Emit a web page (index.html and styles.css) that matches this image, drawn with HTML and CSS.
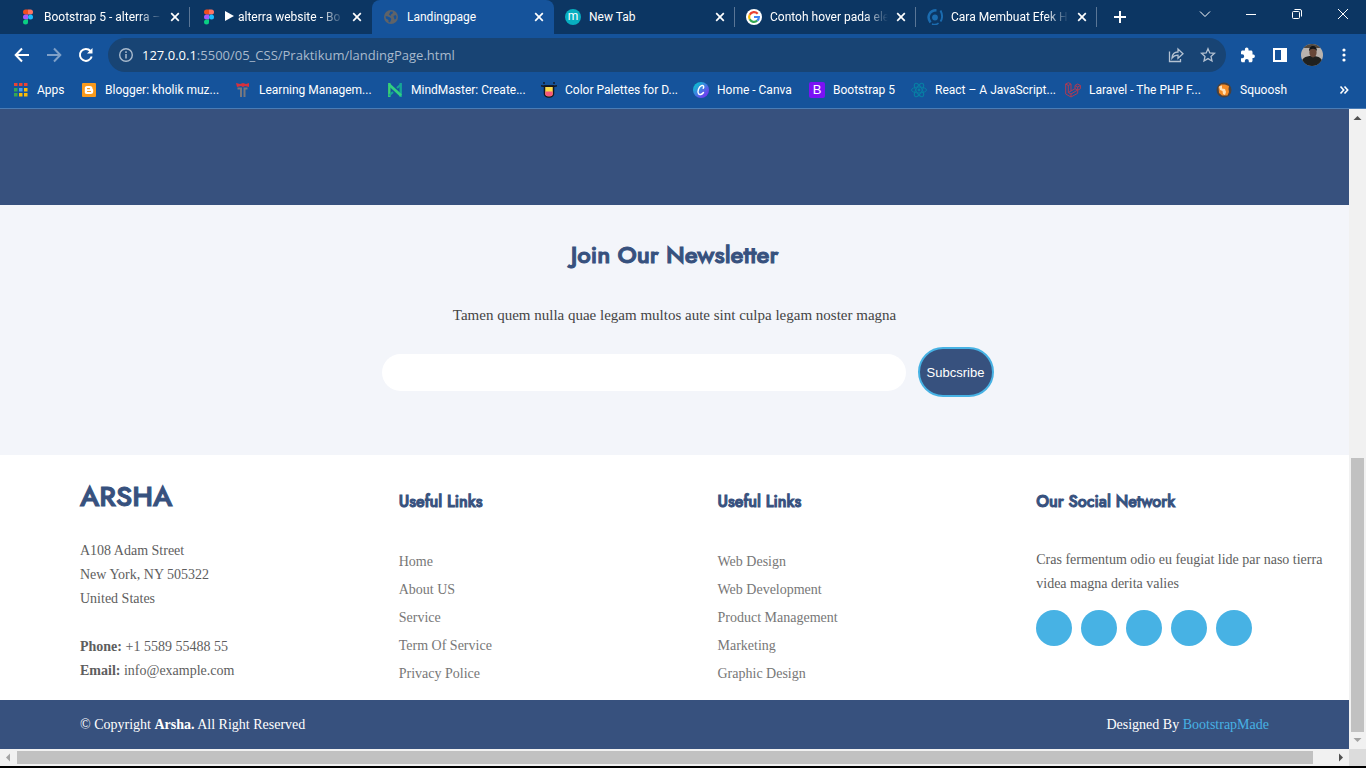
FILE: index.html
```html
<!DOCTYPE html>
<html lang="en">
<head>
<meta charset="utf-8">
<title>Landingpage</title>
<link rel="stylesheet" href="styles.css">
</head>
<body>
<svg class="defs" aria-hidden="true">
  <symbol id="figma" viewBox="0 0 16 16">
    <path fill="#f24e1e" d="M8 .5H5.500a2.500 2.500 0 0 0 0 5H8z"/>
    <path fill="#ff7262" d="M8 .5h2.500a2.500 2.500 0 0 1 0 5H8z"/>
    <path fill="#a259ff" d="M8 5.500H5.500a2.500 2.500 0 0 0 0 5H8z"/>
    <circle cx="10.500" cy="8" r="2.500" fill="#1abcfe"/>
    <path fill="#0acf83" d="M8 10.500H5.500a2.500 2.500 0 1 0 2.500 2.500z"/>
  </symbol>
  <symbol id="close" viewBox="0 0 10 10"><path d="M1.200 1.200l7.600 7.600M8.800 1.200L1.200 8.800" stroke="#fff" stroke-width="1.700" fill="none"/></symbol>
</svg>

<header class="browser">
  <div class="tabstrip">
    <div class="tab"><svg class="icon"><use href="#figma"/></svg><span class="tab-title fade">Bootstrap 5 - alterra –</span><button class="tab-close" aria-label="Close tab"><svg><use href="#close"/></svg></button></div>
    <div class="tab plain"><svg class="icon"><use href="#figma"/></svg><span class="tab-title fade"><svg class="play" viewBox="0 0 9 10"><path fill="#fff" d="M0 0l9 5-9 5z"/></svg>alterra website - Bo</span><button class="tab-close" aria-label="Close tab"><svg><use href="#close"/></svg></button></div>
    <div class="tab active"><svg class="icon" viewBox="0 0 16 16"><circle cx="8" cy="8" r="7" fill="#5f6368"/><path fill="#15539b" d="M2.500 7.500C4 7 5.500 8 7 8.500c1 .5 1.500 1.500 1 2.500l-1 2.500-1.500-.5V11L3 9.500zM7.500 2.500l2.500.3-.5 1.700L8 5.500 7.500 7 6 5.500zM10.500 7l2-1 1 1.500-.5 2.500-1.500.5z"/></svg><span class="tab-title">Landingpage</span><button class="tab-close" aria-label="Close tab"><svg><use href="#close"/></svg></button></div>
    <div class="tab"><span class="icon round-m">m</span><span class="tab-title">New Tab</span><button class="tab-close" aria-label="Close tab"><svg><use href="#close"/></svg></button></div>
    <div class="tab"><svg class="icon" viewBox="0 0 16 16"><circle cx="8" cy="8" r="8" fill="#fff"/><g fill="none" stroke-width="2.200"><path stroke="#ea4335" d="M11.700 4.700A4.900 4.900 0 0 0 3.700 5.700"/><path stroke="#fbbc05" d="M3.700 5.700a4.900 4.900 0 0 0 0 4.600"/><path stroke="#34a853" d="M3.700 10.300a4.900 4.900 0 0 0 7.500 1.400"/><path stroke="#4285f4" d="M11.200 11.700A4.900 4.900 0 0 0 12.900 8H8"/></g></svg><span class="tab-title fade">Contoh hover pada ele</span><button class="tab-close" aria-label="Close tab"><svg><use href="#close"/></svg></button></div>
    <div class="tab"><svg class="icon" viewBox="0 0 16 16"><circle cx="8" cy="8.500" r="2.900" fill="#1b6cb0"/><path d="M9.500 1.300C2 1.500-.5 8 3.500 13.500" fill="none" stroke="#1b6cb0" stroke-width="2.500"/><path d="M5 15c2.500 1 5 .5 6.500-1" fill="none" stroke="#1b6cb0" stroke-width="1.500"/><path d="M13.500 1.500c2 4 2 8 0 11" fill="none" stroke="#1b6cb0" stroke-width="1.900"/></svg><span class="tab-title fade">Cara Membuat Efek H</span><button class="tab-close" aria-label="Close tab"><svg><use href="#close"/></svg></button></div>
    <button class="new-tab" aria-label="New tab"><svg viewBox="0 0 12 12"><path d="M6 0v12M0 6h12" stroke="#fff" stroke-width="2"/></svg></button>
    <div class="window-controls">
      <button aria-label="Search tabs"><svg viewBox="0 0 12 12"><path d="M1 3.500l5 5 5-5"/></svg></button>
      <button aria-label="Minimize"><svg viewBox="0 0 12 12"><path d="M1 6.500h10"/></svg></button>
      <button aria-label="Restore"><svg viewBox="0 0 12 12"><rect x="1.500" y="3.500" width="7" height="7" rx="1"/><path d="M3.500 1.500H9a1.500 1.500 0 0 1 1.500 1.500v5.500"/></svg></button>
      <button aria-label="Close"><svg viewBox="0 0 12 12"><path d="M1 1l10 10M11 1L1 11"/></svg></button>
    </div>
  </div>

  <div class="toolbar">
    <div class="nav">
      <button aria-label="Back"><svg viewBox="0 0 16 16"><path d="M15 8H2M8 1.500L1.700 8 8 14.500"/></svg></button>
      <button aria-label="Forward" class="dim"><svg viewBox="0 0 16 16"><path d="M1 8h13M8 1.500L14.300 8 8 14.500"/></svg></button>
      <button aria-label="Reload"><svg viewBox="0 0 16 16"><path d="M13.700 9.500A6 6 0 1 1 12.500 4"/><path d="M14.500 1v5.500H9z" fill="#fff" stroke="none"/></svg></button>
    </div>
    <div class="omnibox">
      <svg class="info" viewBox="0 0 16 16"><circle cx="8" cy="8" r="6.300" fill="none" stroke="#a9bacd" stroke-width="1.400"/><path d="M8 7v4.500M8 4.300v1.600" stroke="#a9bacd" stroke-width="1.500"/></svg>
      <a class="url" href="#"><span class="host">127.0.0.1</span>:5500/05_CSS/Praktikum/landingPage.html</a>
      <button aria-label="Share"><svg viewBox="0 0 16 16"><path d="M1.500 4.500v10h11V12M4 11c.3-4 2.500-6 6-6V2l5 4.700-5 4.600V8.200C7.500 8.200 5.500 9 4 11z"/></svg></button>
      <button aria-label="Bookmark this page"><svg viewBox="0 0 16 16"><path d="M8 1.700l1.800 4.200 4.700.4-3.500 3.100 1 4.600-4-2.400-4 2.400 1-4.600-3.500-3.100 4.700-.4z"/></svg></button>
    </div>
    <div class="actions">
      <button aria-label="Extensions"><svg viewBox="0 0 16 16"><path fill="#fff" d="M13.500 7.500h-1V5c0-.8-.7-1.500-1.500-1.500H8.500V2.300a1.800 1.800 0 0 0-3.600 0v1.200H2.500C1.700 3.500 1 4.200 1 5v2.300h1.200a2 2 0 0 1 0 4H1v2.400c0 .8.700 1.500 1.500 1.500h2.300V14a2 2 0 0 1 4 0v1.200H11c.8 0 1.500-.7 1.500-1.500V11h1a1.800 1.800 0 0 0 0-3.500z"/></svg></button>
      <button aria-label="Side panel"><svg viewBox="0 0 16 16"><path fill="#fff" fill-rule="evenodd" d="M1 1h14v14H1zM3 3v10h6V3z"/></svg></button>
      <button aria-label="Profile"><svg class="avatar" viewBox="0 0 22 22"><clipPath id="face"><circle cx="11" cy="11" r="11"/></clipPath><g clip-path="url(#face)"><path fill="#b9b3ae" d="M0 0h22v22H0z"/><path fill="#51483f" d="M0 0h22v4H0z"/><path fill="#20211f" d="M0 22c0-8 4-10 11-10s11 2 11 10z"/><ellipse cx="12" cy="8.500" rx="3.600" ry="5" fill="#674738"/><path fill="#151516" d="M8 7.500c-.5-7.500 8.500-7.500 8 0-1-3-6-4-8 0z"/></g></svg></button>
      <button aria-label="Menu"><svg viewBox="0 0 16 16"><g fill="#fff"><circle cx="8" cy="3" r="1.600"/><circle cx="8" cy="8" r="1.600"/><circle cx="8" cy="13" r="1.600"/></g></svg></button>
    </div>
  </div>

  <nav class="bookmarks" aria-label="Bookmarks">
    <a href="#"><svg class="icon" viewBox="0 0 16 16"><path fill="#ea4335" d="M1 1h3.500v3H1zM6 1h3.500v3H6zM11 1h3.500v3H11z"/><path fill="#34a853" d="M1 6h3.500v3.500H1zM1 11h3.500v3.500H1z"/><path fill="#4a9cf5" d="M6 6h3.500v3.500H6z"/><path fill="#fbbc05" d="M11 6h3.500v3.500H11zM6 11h3.500v3.500H6zM11 11h3.500v3.500H11z"/></svg>Apps</a>
    <a href="#"><svg class="icon" viewBox="0 0 16 16"><rect x="1" y="1" width="14" height="14" rx="1" fill="#f99a1c"/><path fill="#fff" d="M6 4h3a2.500 2.500 0 0 1 2.500 2.500c0 1 .7.600.7 1.500v1.500A2.500 2.500 0 0 1 9.700 12H6a2.200 2.200 0 0 1-2.200-2.500v-3A2.300 2.300 0 0 1 6 4z"/><path d="M6.500 6.700h2M6.500 9.500h3" stroke="#f99a1c" stroke-width="1.200" stroke-linecap="round"/></svg>Blogger: kholik muz...</a>
    <a href="#"><svg class="icon" viewBox="0 0 16 16"><path fill="#d8303c" d="M1 1l4 1 3-1 3 1 3-1v4l-4-1-2 1-2-1-4 1z"/><path d="M2.500 6.500H6V15M12.500 6.500H9.500V15" fill="none" stroke="#77787f" stroke-width="2"/></svg>Learning Managem...</a>
    <a href="#"><svg class="icon" viewBox="0 0 16 16"><path d="M13.700 1v14" stroke="#16a596" stroke-width="2.400"/><path d="M2.300 1v14" stroke="#3bd16f" stroke-width="2.400"/><path d="M2 2.500l12 11" stroke="#31d080" stroke-width="2.800"/><path d="M2 13.500L6 10M10 6l4-3.500" stroke="#16a596" stroke-width="2.200"/></svg>MindMaster: Create...</a>
    <a href="#"><svg class="icon" viewBox="0 0 16 16"><path fill="#f9dc4b" stroke="#16161c" stroke-width="1.500" d="M3.500 4h9v7a3.500 3.500 0 0 1-3.500 4H7a3.500 3.500 0 0 1-3.500-4z"/><path fill="#f7577b" d="M4.300 9.500h7.400V11.500A2.500 2.500 0 0 1 9 14.200H7a2.500 2.500 0 0 1-2.700-2.700z"/><path d="M0 3.700c2 .8 14 .8 16 0" fill="none" stroke="#16161c" stroke-width="1.500"/><circle cx="3" cy="1" r=".9" fill="#16161c"/><circle cx="13" cy="1" r=".9" fill="#16161c"/></svg>Color Palettes for D...</a>
    <a href="#"><svg class="icon" viewBox="0 0 16 16"><linearGradient id="canva" x1="0" y1="0" x2="1" y2="1"><stop offset=".1" stop-color="#08c5d0"/><stop offset=".9" stop-color="#7c2ff2"/></linearGradient><circle cx="8" cy="8" r="8" fill="url(#canva)"/><path d="M10.200 6.300c1.300-1.600.2-3.300-1.700-2.600C5.500 5 4.200 9.700 5.500 11.700c1 1.500 3.500.9 5-1.200" fill="none" stroke="#fff" stroke-width="1.400" stroke-linecap="round"/></svg>Home - Canva</a>
    <a href="#"><span class="icon square-b">B</span>Bootstrap 5</a>
    <a href="#"><svg class="icon" viewBox="0 0 16 16"><g fill="none" stroke="#087ea4"><ellipse cx="8" cy="8" rx="7.500" ry="3"/><ellipse cx="8" cy="8" rx="7.500" ry="3" transform="rotate(60 8 8)"/><ellipse cx="8" cy="8" rx="7.500" ry="3" transform="rotate(120 8 8)"/></g><circle cx="8" cy="8" r="1.400" fill="#087ea4"/></svg>React – A JavaScript...</a>
    <a href="#"><svg class="icon" viewBox="0 0 16 16"><path d="M.7 2L3.500.7 6 2v7l4-2.300V3.500l2.700-1.500 2.700 1.500v3.200L12.700 8.300v3L6 15 .7 12zM.7 2l2.600 1.500L6 2M3.300 3.500v7L6 9M3.300 10.500L6 12v3M6 12l6.700-4V5L10 3.500M12.700 5l2.700-1.500M10 6.700l2.700 1.500" fill="none" stroke="#b13a52"/></svg>Laravel - The PHP F...</a>
    <a href="#"><svg class="icon" viewBox="0 0 16 16"><circle cx="8" cy="8" r="7.500" fill="#4a413d"/><path fill="#f58b25" d="M2.500 5L5 2.500h4L13 4l-.5 3 .5 3-1.500 3.500H6L3 11z"/><path fill="#ffe1b6" d="M3 4.500l3-1v3l3 .5 1 3-1 3-2-1-.5-3L4 8z"/></svg>Squoosh</a>
    <button aria-label="More bookmarks"><svg viewBox="0 0 10 10"><path d="M1.500 1.500L4.700 5 1.500 8.500M5.500 1.500L8.700 5 5.500 8.500"/></svg></button>
  </nav>
</header>

<div class="viewport">
  <main class="page">
    <section class="band"></section>
    <section class="newsletter">
      <h2>Join Our Newsletter</h2>
      <p>Tamen quem nulla quae legam multos aute sint culpa legam noster magna</p>
      <form class="subscribe">
        <input type="email" aria-label="Email address">
        <button type="button">Subcsribe</button>
      </form>
    </section>
    <footer>
      <div class="columns">
        <section>
          <h1>ARSHA</h1>
          <address>A108 Adam Street<br>New York, NY 505322<br>United States<br><br><strong>Phone:</strong> +1 5589 55488 55<br><strong>Email:</strong> info@example.com</address>
        </section>
        <section>
          <h3>Useful Links</h3>
          <ul>
            <li><a href="#">Home</a></li>
            <li><a href="#">About US</a></li>
            <li><a href="#">Service</a></li>
            <li><a href="#">Term Of Service</a></li>
            <li><a href="#">Privacy Police</a></li>
          </ul>
        </section>
        <section>
          <h3>Useful Links</h3>
          <ul>
            <li><a href="#">Web Design</a></li>
            <li><a href="#">Web Development</a></li>
            <li><a href="#">Product Management</a></li>
            <li><a href="#">Marketing</a></li>
            <li><a href="#">Graphic Design</a></li>
          </ul>
        </section>
        <section>
          <h3>Our Social Network</h3>
          <p>Cras fermentum odio eu feugiat lide par naso tierra videa magna derita valies</p>
          <div class="social">
            <a href="#" aria-label="Twitter"></a>
            <a href="#" aria-label="Facebook"></a>
            <a href="#" aria-label="Instagram"></a>
            <a href="#" aria-label="Skype"></a>
            <a href="#" aria-label="LinkedIn"></a>
          </div>
        </section>
      </div>
      <div class="copyright">
        <span>© Copyright <strong>Arsha.</strong> All Right Reserved</span>
        <span>Designed By <a href="#">BootstrapMade</a></span>
      </div>
    </footer>
  </main>
  <div class="vscroll">
    <svg viewBox="0 0 17 17"><path fill="#505050" d="M4.500 11L8.500 7l4 4z"/></svg>
    <div class="vspace"></div>
    <div class="vthumb"></div>
    <svg viewBox="0 0 17 17"><path fill="#a3a3a3" d="M4.500 6l4 4 4-4z"/></svg>
  </div>
</div>
<div class="hscroll">
  <svg viewBox="0 0 17 17"><path fill="#a3a3a3" d="M10 4.500l-4 4 4 4z"/></svg>
  <div class="hthumb"></div>
  <svg viewBox="0 0 17 17"><path fill="#505050" d="M7 4.500l4 4-4 4z"/></svg>
  <div class="corner"></div>
</div>
</body>
</html>
```

FILE: styles.css
```css
* { box-sizing: border-box; }

body {
  margin: 0;
  min-height: 100vh;
  display: flex;
  flex-direction: column;
  background: #000;
  font-family: "Times New Roman", "Liberation Serif", serif;
}

button {
  border: 0;
  padding: 0;
  background: none;
  display: flex;
  align-items: center;
  justify-content: center;
}

a { text-decoration: none; color: inherit; }

.defs { display: none; }

/* Browser chrome */
.browser {
  background: #15539b;
  border-bottom: 1px solid #4a7cb5;
  color: #fff;
  font-family: "Segoe UI", Roboto, "Open Sans", sans-serif;
  font-size: 12px;
}

.icon { width: 16px; height: 16px; flex: none; }

.tabstrip {
  height: 34px;
  padding-left: 9px;
  display: flex;
  align-items: stretch;
  background: #0c3663;
}

.tab {
  flex: 0 1 181px;
  min-width: 0;
  display: flex;
  align-items: center;
  gap: 8px;
  padding: 0 10px 0 11px;
  position: relative;
}

.tab::after {
  content: "";
  position: absolute;
  right: 0;
  top: 7px;
  height: 20px;
  width: 1px;
  background: #5a7696;
}

.tab.plain::after, .tab.active::after { display: none; }

.tab.plain, .tab.active { flex-basis: 182px; }

.tab.active {
  background: #15539b;
  border-radius: 8px 8px 0 0;
}

.tab-title {
  flex: 1;
  min-width: 0;
  overflow: hidden;
  white-space: nowrap;
}

.tab-title.fade {
  -webkit-mask-image: linear-gradient(to right, #000 80%, transparent);
  mask-image: linear-gradient(to right, #000 80%, transparent);
}

.play { width: 9px; height: 10px; margin-right: 4px; }

.tab-close svg { width: 10px; height: 10px; }
.tab-close { width: 10px; }

.round-m, .square-b {
  display: flex;
  align-items: center;
  justify-content: center;
  line-height: 16px;
}
.round-m { border-radius: 50%; background: #08afc0; font-size: 12px; padding-bottom: 2px; }
.square-b { border-radius: 2px; background: #7a12f5; font-family: "Liberation Sans", sans-serif; font-size: 13px; }

.new-tab { width: 46px; }
.new-tab svg { width: 12px; height: 12px; }

.window-controls { display: flex; margin-left: auto; height: 28px; }
.window-controls button { width: 46px; }
.window-controls svg { width: 12px; height: 12px; fill: none; stroke: #fff; }

.toolbar {
  display: flex;
  align-items: center;
  padding: 4px 6px 0;
}

.nav, .actions { display: flex; }
.nav button, .actions button { width: 32px; height: 32px; }
.nav svg, .actions svg { width: 16px; height: 16px; }
.nav svg { fill: none; stroke: #fff; stroke-width: 2; }
.nav .dim { opacity: .45; }
.actions .avatar { width: 22px; height: 22px; }

.omnibox {
  flex: 1;
  height: 34px;
  margin: 0 6px;
  padding: 0 2px 0 10px;
  border-radius: 17px;
  background: #184474;
  display: flex;
  align-items: center;
}
.info { width: 16px; height: 16px; margin-right: 8px; }
.url {
  flex: 1;
  font-family: "Segoe UI", "Open Sans", sans-serif;
  font-size: 13px;
  color: #a9bacd;
}
.host { color: #fff; }
.omnibox button { width: 32px; }
.omnibox button svg { width: 16px; height: 16px; fill: none; stroke: #b4c2d2; stroke-width: 1.3; }

.bookmarks {
  height: 36px;
  padding: 0 16px 0 13px;
  display: grid;
  grid-template-columns: 68px 154px 152px 154px 152px 116px 102px 154px 151px 1fr 12px;
  align-items: center;
}
.bookmarks a {
  display: flex;
  align-items: center;
  gap: 8px;
  white-space: nowrap;
}
.bookmarks button svg { width: 10px; height: 10px; fill: none; stroke: #fff; stroke-width: 1.6; }

/* Page */
.viewport { display: flex; flex: 1; }

.page { flex: 1; min-width: 0; background: #fff; }

.band { height: 96px; background: #37517e; }

h1, h2, h3 {
  margin: 0;
  color: #37517e;
  font-family: Jost, Lato, sans-serif;
  font-weight: 500;
  -webkit-text-stroke: 1px #37517e;
}

.newsletter {
  background: #f3f5fa;
  height: 250px;
  padding-top: 32px;
  text-align: center;
}
.newsletter h2 { font-size: 24px; line-height: 36px; }
.newsletter p {
  margin: 32px 0 22px;
  font-size: 15px;
  line-height: 20px;
  color: #444;
}

.subscribe {
  display: flex;
  align-items: center;
  justify-content: center;
  gap: 12px;
  padding-left: 26px;
}
.subscribe input {
  width: 524px;
  height: 37px;
  padding: 0 16px;
  border: 0;
  border-radius: 20px;
  background: #fff;
}
.subscribe button {
  width: 76px;
  height: 50px;
  border: 2px solid #47b2e4;
  border-radius: 25px;
  background: #37517e;
  color: #fff;
  font-family: Arial, "Liberation Sans", sans-serif;
  font-size: 13px;
}

.columns {
  display: grid;
  grid-template-columns: repeat(4, 1fr);
  gap: 20px;
  padding: 24px 14px 12px 80px;
  font-size: 14px;
  line-height: 24px;
  color: #5e5e5e;
}
.columns h1 { font-size: 28px; line-height: 36px; margin-bottom: 24px; }
.columns h3 { font-size: 16px; line-height: 24px; margin: 11px 0 34px; }
.columns address { font-style: normal; }
.columns p { margin: 0 0 14px; }
.columns ul { list-style: none; margin: 0; padding: 0; line-height: 28px; color: #777; }

.social { display: flex; gap: 9px; }
.social a { width: 36px; height: 36px; border-radius: 50%; background: #47b2e4; }

.copyright {
  display: flex;
  justify-content: space-between;
  padding: 13px 80px 12px;
  background: #37517e;
  color: #fff;
  font-size: 14px;
  line-height: 24px;
}
.copyright a { color: #47b2e4; }

/* Scrollbars */
.vscroll {
  width: 17px;
  display: flex;
  flex-direction: column;
  background: #f1f1f1;
}
.vscroll svg, .hscroll svg { width: 17px; height: 17px; flex: none; }
.vspace { flex: 332; }
.vthumb { flex: 274; margin: 0 2px; background: #c1c1c1; }

.hscroll {
  height: 17px;
  margin-bottom: 2px;
  display: flex;
  background: #f1f1f1;
}
.hthumb { flex: 1; margin: 2px 19px 2px 0; background: #c1c1c1; }
.corner { width: 17px; background: #dcdcdc; }
```
